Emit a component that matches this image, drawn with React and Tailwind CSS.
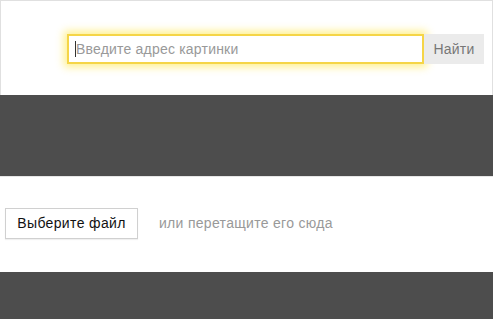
export default function App() {
  return (
    <div className="w-[493px] h-[319px] overflow-hidden bg-[#4d4d4d] font-['Liberation_Sans',Arial,sans-serif]">
      <div className="h-[95px] bg-white border-t border-l border-r border-[#e0e0e0] flex items-center pl-[66px] pt-[2px]">
        <div className="flex items-center">
          <div className="w-[357px] h-[30px] border-2 border-[#f5d547] bg-white shadow-[0_0_8px_3px_rgba(255,221,0,0.45)] flex items-center pl-[6px]">
            <span className="w-px h-[16px] bg-[#333]"></span>
            <span className="text-[14px] tracking-[0.2px] text-[#999] leading-none">Введите адрес картинки</span>
          </div>
          <div className="w-[60px] h-[30px] bg-[#ebebeb] flex items-center justify-center text-[14px] tracking-[0.2px] text-[#777]">Найти</div>
        </div>
      </div>
      <div className="h-[81px]"></div>
      <div className="h-[96px] bg-white border-t border-[#e6e6e6] flex items-center pl-[5px] pb-[2px]">
        <div className="w-[133px] h-[31px] border border-[#d0d0d0] bg-white flex items-center justify-center text-[14px] tracking-[0.35px] text-[#111] shadow-[0_1px_1px_rgba(0,0,0,0.06)]">Выберите файл</div>
        <span className="ml-[21px] text-[14px] tracking-[0.3px] text-[#999]">или перетащите его сюда</span>
      </div>
    </div>
  );
}
